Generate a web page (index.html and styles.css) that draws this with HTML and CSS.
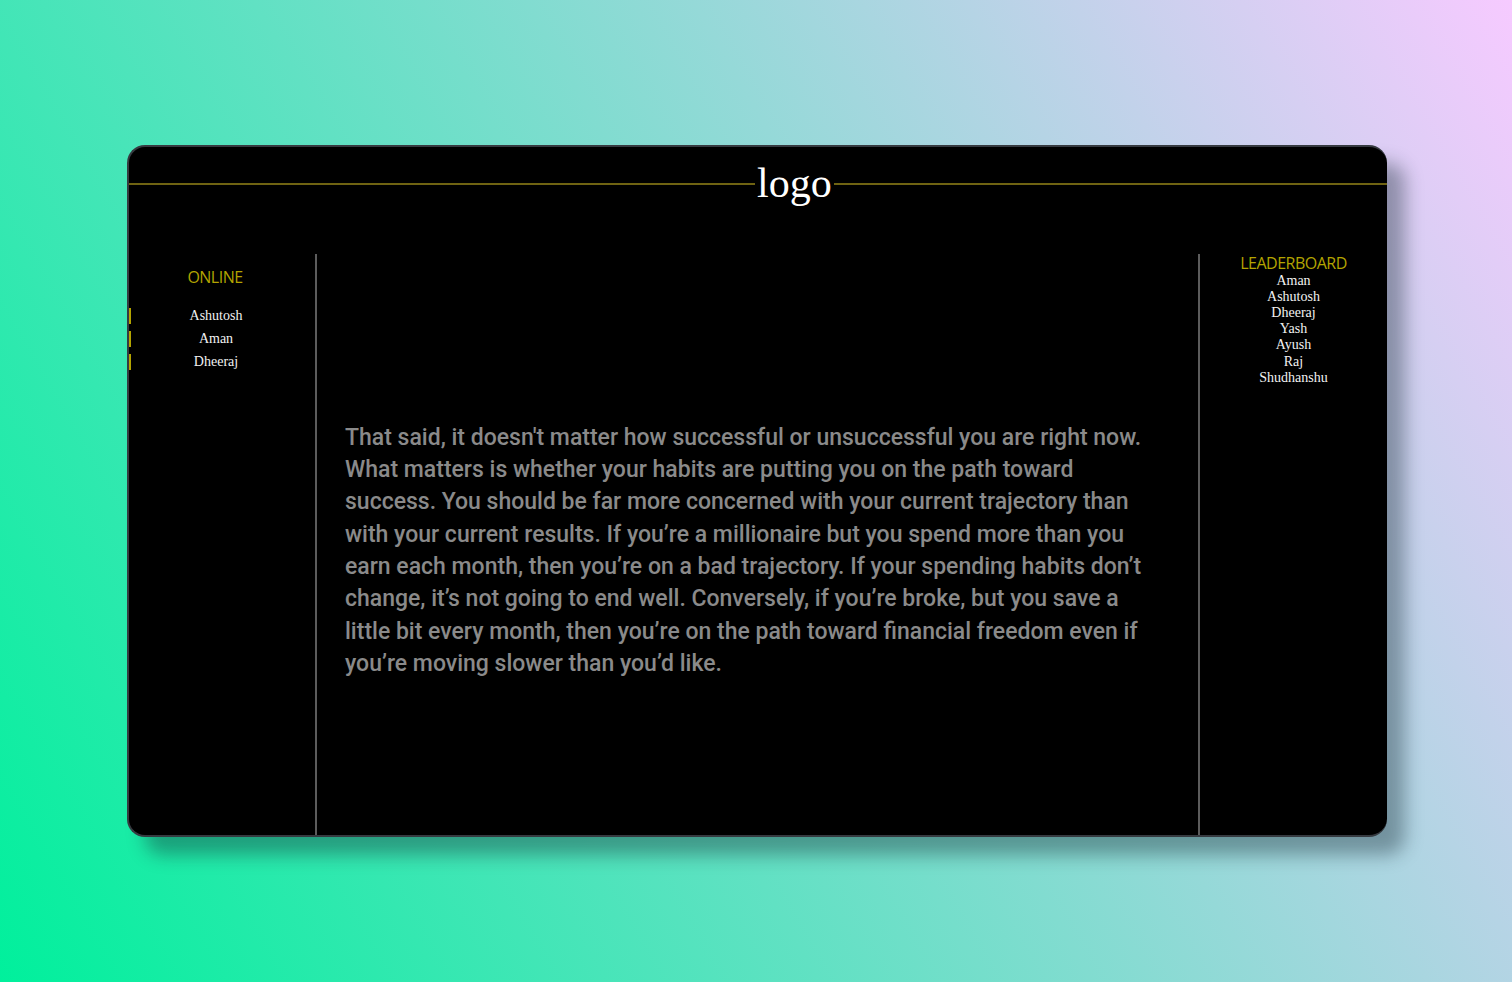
FILE: index.html
```html
<!DOCTYPE html>
<html lang="en">
<head>
<meta charset="utf-8">
<title>Dashboard</title>
<link rel="stylesheet" href="styles.css">
</head>
<body>
<div class="window">
  <header class="header">
    <div class="rule"></div>
    <div class="logo">logo</div>
  </header>
  <div class="content">
    <aside class="online">
      <h2 class="online-title">ONLINE</h2>
      <ul class="online-list">
        <li>Ashutosh</li>
        <li>Aman</li>
        <li>Dheeraj</li>
      </ul>
    </aside>
    <main class="main">
      <p class="quote">That said, it doesn't matter how successful or unsuccessful you are right now.<br>What matters is whether your habits are putting you on the path toward<br>success. You should be far more concerned with your current trajectory than<br>with your current results. If you’re a millionaire but you spend more than you<br>earn each month, then you’re on a bad trajectory. If your spending habits don’t<br>change, it’s not going to end well. Conversely, if you’re broke, but you save a<br>little bit every month, then you’re on the path toward financial freedom even if<br>you’re moving slower than you’d like.</p>
    </main>
    <aside class="board">
      <h2 class="board-title">LEADERBOARD</h2>
      <ul class="board-list">
        <li>Aman</li>
        <li>Ashutosh</li>
        <li>Dheeraj</li>
        <li>Yash</li>
        <li>Ayush</li>
        <li>Raj</li>
        <li>Shudhanshu</li>
      </ul>
    </aside>
  </div>
</div>
</body>
</html>
```

FILE: styles.css
```css
html, body {
  margin: 0;
  padding: 0;
}
body {
  height: 100vh;
  display: flex;
  align-items: center;
  justify-content: center;
  background: linear-gradient(60deg, #00f09c 0%, #f6caff 100%);
  font-family: "Liberation Serif", serif;
}
.window {
  box-sizing: border-box;
  width: 1260px;
  height: 692px;
  margin-left: 2px;
  margin-top: -1px;
  background: #000;
  border: 2px solid #363a40;
  border-right-width: 0;
  border-radius: 18px;
  box-shadow: 18px 18px 18px rgba(20, 40, 50, 0.38);
  display: flex;
  flex-direction: column;
  overflow: hidden;
}
.header {
  position: relative;
  height: 107px;
  flex: none;
}
.rule {
  margin-top: 36px;
  height: 2px;
  background: #6f6312;
}
.logo {
  position: absolute;
  left: 50%;
  top: 12px;
  margin-left: -3px;
  padding: 0 2px;
  background: #000;
  color: #fff;
  font-family: "Liberation Serif", serif;
  font-size: 42px;
  line-height: 48px;
}
.content {
  flex: 1;
  display: flex;
  min-height: 0;
}
.online {
  flex: none;
  border-right: 2px solid #5c5c5c;
  padding-right: 14px;
  box-sizing: border-box;
  width: 188px;
  text-align: center;
}
.online-title,
.board-title {
  margin: 0;
  font-family: "Open Sans", sans-serif;
  font-weight: 400;
  font-size: 16px;
  letter-spacing: -0.5px;
  color: #b3a400;
}
.online-title {
  margin-top: 12px;
  line-height: 22px;
}
.online-list,
.board-list {
  list-style: none;
  margin: 0;
  padding: 0;
  color: #f2f2f2;
  font-family: "Liberation Serif", serif;
  font-size: 14px;
}
.online-list {
  margin-top: 20px;
}
.online-list li {
  line-height: 16px;
  margin-bottom: 7px;
  border-left: 2px solid #b3a400;
}
.main {
  flex: 1;
  display: flex;
  align-items: center;
  padding: 14px 20px 0 28px;
  min-width: 0;
}
.quote {
  margin: 0;
  color: #8a8a8a;
  font-family: Roboto, sans-serif;
  font-weight: 500;
  font-size: 23px;
  line-height: 32.3px;
  white-space: nowrap;
}
.board {
  width: 189px;
  flex: none;
  box-sizing: border-box;
  border-left: 2px solid #5c5c5c;
  text-align: center;
}
.board-title {
  line-height: 19px;
}
.board-list li {
  line-height: 16.2px;
}
```
